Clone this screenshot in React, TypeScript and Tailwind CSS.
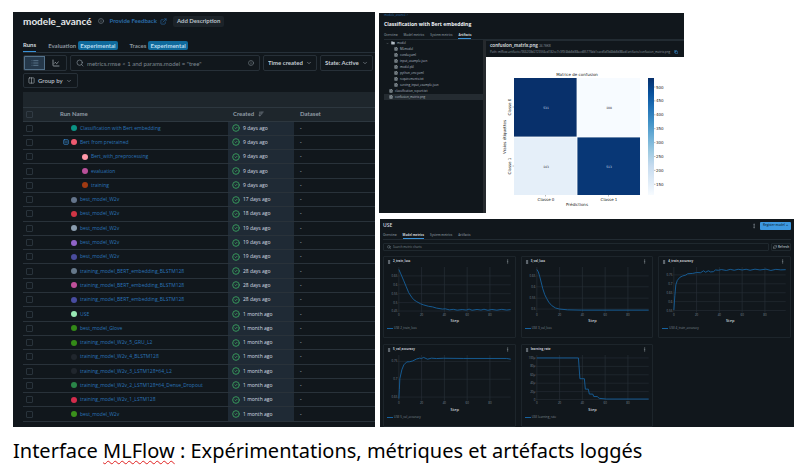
import React from "react";
import {
  ChevronDown,
  CircleCheck,
  Copy,
  EllipsisVertical,
  ExternalLink,
  FileText,
  Folder,
  GripVertical,
  Info,
  LineChart,
  List,
  Columns2,
  RefreshCw,
  Search,
  SquareMinus,
  ArrowDownWideNarrow,
} from "lucide-react";

type Run = { name: string; color: string; age: string; child?: boolean; parent?: boolean };

const runs: Run[] = [
  { name: "Classification with Bert embedding", color: "bg-[#0b9384]", age: "9 days ago" },
  { name: "Bert from pretrained", color: "bg-[#ee5a70]", age: "9 days ago", parent: true },
  { name: "Bert_with_preprocessing", color: "bg-[#ff98a8]", age: "9 days ago", child: true },
  { name: "evaluation", color: "bg-[#b9509a]", age: "9 days ago", child: true },
  { name: "training", color: "bg-[#a03a12]", age: "9 days ago", child: true },
  { name: "best_model_W2v", color: "bg-[#64748b]", age: "17 days ago" },
  { name: "best_model_W2v", color: "bg-[#d03545]", age: "18 days ago" },
  { name: "best_model_W2v", color: "bg-[#8a9cae]", age: "19 days ago" },
  { name: "best_model_W2v", color: "bg-[#9063c8]", age: "19 days ago" },
  { name: "best_model_W2v", color: "bg-[#4a4c9c]", age: "19 days ago" },
  { name: "training_model_BERT_embedding_BLSTM128", color: "bg-[#66788a]", age: "28 days ago" },
  { name: "training_model_BERT_embedding_BLSTM128", color: "bg-[#c0509a]", age: "28 days ago" },
  { name: "training_model_BERT_embedding_BLSTM128", color: "bg-[#484ca0]", age: "28 days ago" },
  { name: "USE", color: "bg-[#98e8b4]", age: "1 month ago" },
  { name: "best_model_Glove", color: "bg-[#338a18]", age: "1 month ago" },
  { name: "training_model_W2v_5_GRU_L2", color: "bg-[#338a18]", age: "1 month ago" },
  { name: "training_model_W2v_4_BLSTM128", color: "bg-[#20262d]", age: "1 month ago" },
  { name: "training_model_W2v_3_LSTM128+64_L2", color: "bg-[#20262d]", age: "1 month ago" },
  { name: "training_model_W2v_2_LSTM128+64_Dense_Dropout", color: "bg-[#2a8648]", age: "1 month ago" },
  { name: "training_model_W2v_1_LSTM128", color: "bg-[#d42c4c]", age: "1 month ago" },
  { name: "best_model_W2v", color: "bg-[#3a901c]", age: "1 month ago" },
];

function Badge() {
  return (
    <span className="rounded-[2px] bg-[#0f6a9c] px-[2px] py-[1px] text-[6px] leading-[7px] font-bold text-[#b8dcf0]">
      Experimental
    </span>
  );
}

function Picker({ label }: { label: string }) {
  return (
    <label className="relative flex h-4 shrink-0 items-center rounded-[2px] border border-[#273038]">
      <select
        aria-label={label}
        className="appearance-none bg-transparent pr-[13px] pl-[4px] text-[6px] font-bold text-[#c3cbd2]"
      >
        <option>{label}</option>
      </select>
      <ChevronDown size={6} className="pointer-events-none absolute right-[4px] text-[#a8b2ba]" />
    </label>
  );
}

function RunsPanel() {
  return (
    <section className="bg-[#11171c] pb-[5px] pl-[10px] font-['Lato','Noto_Sans',sans-serif] leading-none">
      <header className="flex h-[18px] items-center gap-[6px]">
        <h1 className="text-[10px] font-bold text-[#e4e8eb]">modele_avancé</h1>
        <Info size={6} className="text-[#84909a]" />
        <a href="#feedback" className="flex items-center gap-[3px] text-[6px] font-bold text-[#2b6ca8]">
          Provide Feedback <ExternalLink size={7} />
        </a>
        <button className="h-[11px] rounded-[2px] bg-[#1c2329] px-[4px] text-[6px] font-bold text-[#b9c1c8]">
          Add Description
        </button>
      </header>
      <nav className="mt-[9px] flex h-[14px] gap-[12px] border-b border-[#263039] text-[6px] font-bold text-[#8b969f]">
        <a href="#runs" className="flex items-center border-b border-[#3a92d8] text-[#d3d9de]">
          Runs
        </a>
        <a href="#evaluation" className="flex items-center gap-[2px]">
          Evaluation <Badge />
        </a>
        <a href="#traces" className="flex items-center gap-[2px]">
          Traces <Badge />
        </a>
      </nav>
      <div className="mt-[2px] flex gap-[3px] pr-[2px]">
        <div className="flex h-4 w-11 shrink-0 overflow-hidden rounded-[2px] border border-[#273038]">
          <button aria-label="Table view" className="flex w-1/2 items-center justify-center border border-[#53718a] bg-[#25384a] text-[#7292ab]">
            <List size={8} />
          </button>
          <button aria-label="Chart view" className="flex w-1/2 items-center justify-center text-[#c0c8ce]">
            <LineChart size={8} />
          </button>
        </div>
        <label className="flex h-4 min-w-0 flex-1 items-center gap-[3px] rounded-[2px] border border-[#273038] px-[5px] text-[#87929b]">
          <Search size={8} className="shrink-0" />
          <input
            aria-label="Search runs"
            placeholder={'metrics.rmse < 1 and params.model = "tree"'}
            className="min-w-0 flex-1 bg-transparent text-[6px] placeholder:text-[#7d8790] focus:outline-none"
          />
          <Info size={6} className="shrink-0" />
        </label>
        <Picker label="Time created" />
        <Picker label="State: Active" />
      </div>
      <button className="mt-[2px] flex h-[15px] w-[55px] items-center gap-[3px] rounded-[2px] border border-[#273038] pl-[4px] text-[6px] font-bold text-[#aab3ba]">
        <Columns2 size={7} /> Group by <ChevronDown size={6} />
      </button>
      <table className="mt-[4px] h-[330px] w-full table-fixed border-collapse border-b border-[#29323a] text-left">
        <colgroup>
          <col className="w-[37px]" />
          <col className="w-[168px]" />
          <col className="w-[66px]" />
          <col />
        </colgroup>
        <thead className="bg-[#1e262c] text-[6px] font-bold text-[#909ba4]">
          <tr className="h-[15px] border-b border-[#2d373f]">
            <td colSpan={4} />
          </tr>
          <tr className="h-[14px] border-b border-[#2d373f]">
            <th className="pl-[3px]">
              <input type="checkbox" aria-label="Select all runs" className="block size-[7px] appearance-none rounded-[1px] border border-[#313b44]" />
            </th>
            <th>Run Name</th>
            <th className="pl-[5px]">
              <span className="flex items-center gap-[4px]">
                Created <ArrowDownWideNarrow size={6} />
              </span>
            </th>
            <th className="pl-[6px]">Dataset</th>
          </tr>
        </thead>
        <tbody className="font-['Open_Sans','Noto_Sans',sans-serif] text-[5px]">
          {runs.map((run, i) => (
            <tr key={i} className="h-[14px] border-b border-[#29323a]">
              <td className="pl-[3px]">
                <input type="checkbox" aria-label={`Select ${run.name}`} className="block size-[7px] appearance-none rounded-[1px] border border-[#29333b]" />
              </td>
              <td>
                <span className={run.child ? "flex items-center gap-[3px] pl-[22px]" : "flex items-center gap-[3px] pl-[3px]"}>
                  {!run.child && (
                    <span className="flex w-[5px] text-[#3a8ad0]">{run.parent && <SquareMinus size={6} strokeWidth={3} className="shrink-0" />}</span>
                  )}
                  <span className={`size-[6px] shrink-0 rounded-full ${run.color}`} />
                  <a href="#run" className="whitespace-nowrap text-[#2b74b8]">
                    {run.name}
                  </a>
                </span>
              </td>
              <td className="bg-[#1f2a35] pl-[4px]">
                <span className="flex items-center gap-[3px] whitespace-nowrap text-[#d5dde3]">
                  <CircleCheck size={8} strokeWidth={3} className="text-[#37945a]" /> {run.age}
                </span>
              </td>
              <td className="pl-[6px] text-[#d5dde3]">-</td>
            </tr>
          ))}
        </tbody>
      </table>
    </section>
  );
}

const files = [
  "MLmodel",
  "conda.yaml",
  "input_example.json",
  "model.pkl",
  "python_env.yaml",
  "requirements.txt",
  "serving_input_example.json",
];

function Tabs({ active }: { active: string }) {
  return (
    <nav className="flex gap-[6px] border-b border-[#222b32] text-[3px] font-semibold text-[#7d8892]">
      {["Overview", "Model metrics", "System metrics", "Artifacts"].map((t) => (
        <a
          key={t}
          href="#tab"
          className={
            t === active
              ? "flex h-[7px] items-center border-b border-[#3a92d8] font-bold text-[#d3d9de]"
              : "flex h-[7px] items-center"
          }
        >
          {t}
        </a>
      ))}
    </nav>
  );
}

const barTicks = [500, 450, 400, 350, 300, 250, 200, 150];

function ConfusionMatrix() {
  return (
    <svg viewBox="0 0 198 156" className="block w-full bg-white font-['DejaVu_Sans',sans-serif]" role="img" aria-label="Matrice de confusion">
      <defs>
        <linearGradient id="blues" x1="0" y1="0" x2="0" y2="1">
          <stop offset="0" stopColor="#08306b" />
          <stop offset="0.13" stopColor="#08519c" />
          <stop offset="0.25" stopColor="#2171b5" />
          <stop offset="0.38" stopColor="#4292c6" />
          <stop offset="0.5" stopColor="#6baed6" />
          <stop offset="0.63" stopColor="#9ecae1" />
          <stop offset="0.75" stopColor="#c6dbef" />
          <stop offset="0.88" stopColor="#deebf7" />
          <stop offset="1" stopColor="#f7fbff" />
        </linearGradient>
      </defs>
      <rect x="28" y="21" width="63" height="59" fill="#08306b" />
      <rect x="91" y="21" width="63" height="59" fill="#f7fbff" />
      <rect x="28" y="80" width="63" height="58" fill="#e5eff9" />
      <rect x="91" y="80" width="63" height="58" fill="#083776" />
      <path d="M91 21V138M28 80H154" stroke="#fff" strokeWidth="0.8" />
      <path d="M59.500 138v1.500M122.500 138v1.500M28 50h-1.500M28 109h-1.500" stroke="#555" strokeWidth="0.4" />
      <g fill="#222" fontSize="4" textAnchor="middle">
        <text x="91" y="19">Matrice de confusion</text>
        <text x="60" y="52" fill="#d5dfec" fontSize="3">531</text>
        <text x="123" y="52" fontSize="3">108</text>
        <text x="60" y="111" fontSize="3">143</text>
        <text x="123" y="111" fill="#d5dfec" fontSize="3">513</text>
        <text x="60" y="144">Classe 0</text>
        <text x="123" y="144">Classe 1</text>
        <text x="91" y="149">Prédictions</text>
        <text transform="translate(25 50) rotate(-90)">Classe 0</text>
        <text transform="translate(25 109) rotate(-90)">Classe 1</text>
        <text transform="translate(20 80) rotate(-90)">Vraies étiquettes</text>
      </g>
      <rect x="162" y="21" width="6" height="117" fill="url(#blues)" />
      {barTicks.map((v, i) => (
        <g key={v}>
          <path d={`M168 ${30 + i * 13.9}h1.500`} stroke="#555" strokeWidth="0.4" />
          <text x="170" y={31.5 + i * 13.9} fontSize="4" fill="#222">{v}</text>
        </g>
      ))}
    </svg>
  );
}

function ArtifactsPanel() {
  return (
    <section className="w-[73.5%] bg-[#11171c] font-['Open_Sans','Noto_Sans',sans-serif] leading-none">
      <div className="h-[27px] pt-px pl-[5px]">
        <a href="#parent" className="block h-[5px] text-[3px] text-[#2b6ca8]">modele_avancé &gt;</a>
        <h2 className="pt-[2px] text-[5px] leading-[6px] font-bold text-[#eef1f4]">Classification with Bert embedding</h2>
        <div className="pt-[5px]">
          <Tabs active="Artifacts" />
        </div>
      </div>
      <div className="grid grid-cols-[107fr_198fr]">
        <div className="flex">
          <ul className="flex flex-1 flex-col pl-[5px] text-[3px] text-[#b3bcc4]">
            <li className="flex h-[6px] items-center gap-[2px] pl-[2px]">
              <ChevronDown size={3} />
              <Folder size={4} fill="currentColor" /> model
            </li>
            {files.map((f) => (
              <li key={f} className="flex h-[6px] items-center gap-[2px] pl-[10px]">
                <FileText size={4} strokeWidth={3} /> {f}
              </li>
            ))}
            <li className="flex h-[6px] items-center gap-[2px] pl-[5px]">
              <FileText size={4} strokeWidth={3} /> classification_report.txt
            </li>
            <li className="flex h-[6px] items-center gap-[2px] bg-[#242b31] pl-[5px]">
              <FileText size={4} strokeWidth={3} /> confusion_matrix.png
            </li>
          </ul>
          <div className="w-[3px] bg-[#262a2e]" />
        </div>
        <div className="min-w-0">
          <div className="h-[17px] border-t border-[#222b32] pt-[2px] pl-[4px]">
            <p className="font-['Lato',sans-serif] text-[5px] font-bold text-[#d5dade]">
              confusion_matrix.png <span className="text-[3px] font-normal text-[#7d8892]">24.78KB</span>
            </p>
            <p className="flex items-center gap-[4px] pt-[2px] text-[3px] whitespace-nowrap text-[#8b969f]">
              Path: mlflow-artifacts:/966208d27235f4ed182ce7c3f9/4bb8d88aed85775bb1cacd5d9d4bb8d88ad/artifacts/confusion_matrix.png
              <Copy size={4} strokeWidth={3} className="text-[#3a92d8]" />
            </p>
          </div>
          <ConfusionMatrix />
        </div>
      </div>
    </section>
  );
}

type Chart = { title: string; ticks: [string, number][]; line: string };

const charts: Chart[] = [
  {
    title: "2_train_loss",
    ticks: [["0.65", 10], ["0.6", 19], ["0.55", 28], ["0.5", 37], ["0.45", 45.5]],
    line: "M15 3.500L17 8L20 15L22.500 21L25 27L28 31.500L30 34L33 36L37 38.200L40 39.300L45 40.700L49 41.300L53 42.500L59 43.500L62 43.300L66 44.300L70 43.800L74 44.600L79 44L83 44.500L86 43.600L89 44.700L94 43.900L98 44.500L101 43.700L105 44.700L109 43.900L114 44.600L119 43.800L124 44.500L128 44",
  },
  {
    title: "3_val_loss",
    ticks: [["0.65", 10], ["0.6", 21], ["0.55", 32.5], ["0.5", 43.5]],
    line: "M15 3.500L16.500 6L18 11L21 23L23 29L25 33L27 36.500L30 40L34 42.500L38 43.500L46 44.300L60 44.600H128",
  },
  {
    title: "4_train_accuracy",
    ticks: [["0.75", 9], ["0.7", 18], ["0.65", 27], ["0.6", 36], ["0.55", 45]],
    line: "M15 44.500L16 30L17 19L18.500 14.500L21 11.500L24 10L27 9.200L29 7.800L34 7.500L38 6.600L42 6.800L45 4.800L47 6.300L50 4.800L52 6L55 5.700L57 4L60 4.300L63 3.600L68 4.500L72 3.400L76 4.300L80 3.300L84 4L88 3.300L92 4.300L97 3.200L102 4L108 3.200L113 4.500L118 3.400L123 3.900L128 3.700",
  },
  {
    title: "5_val_accuracy",
    ticks: [["0.75", 7.5], ["0.7", 25.5], ["0.65", 43.5]],
    line: "M15 45L15.500 36L16 25L18 16L20 11L23 8L26 7.800L29 7L33 5L36 4.200L38 4.500L40 3.500L44 5.200L48 4.200L53 4.600L60 4.300L80 4.500H124L128 5.200",
  },
  {
    title: "learning_rate",
    ticks: [["100µ", 4], ["80µ", 12.5], ["60µ", 21], ["40µ", 29.5], ["20µ", 38], ["0", 46]],
    line: "M15 4H57L58.500 25H63L64 35.500H67L68 40.500H71.500L72.500 43H76L78 44.800L85 45.500H128",
  },
];

function ChartCard({ chart }: { chart: Chart }) {
  return (
    <article className="rounded-[1px] border border-[#1d252b] pb-[7px]">
      <header className="flex h-[9px] items-center gap-[2px] pr-[5px] pl-[3px] text-[#9ba5ad]">
        <GripVertical size={4} strokeWidth={3} />
        <h3 className="flex-1 text-[3px] font-bold text-[#c6cdd3]">{chart.title}</h3>
        <EllipsisVertical size={5} />
      </header>
      <svg viewBox="0 0 132 52" className="block w-full font-['Open_Sans',sans-serif]" role="img" aria-label={chart.title}>
        {[15, 38, 61, 84, 107].map((x, i) => (
          <g key={x}>
            <path d={`M${x} 1V47`} stroke="#2a333b" strokeWidth="0.6" />
            <text x={x} y="51" fontSize="3" textAnchor="middle" fill="#7d8892">{i * 20}</text>
          </g>
        ))}
        {chart.ticks.map(([label, y]) => (
          <g key={label}>
            <path d={`M14 ${y}H128`} stroke="#263038" strokeWidth="0.6" />
            <text x="13.500" y={y + 1} fontSize="3" textAnchor="end" fill="#7d8892">{label}</text>
          </g>
        ))}
        <path d={chart.line} fill="none" stroke="#17629e" strokeWidth="0.9" />
      </svg>
      <p className="mt-[2px] pl-[11px] text-center text-[4px] font-semibold text-[#c6cdd3]">Step</p>
      <p className="mt-[4px] flex items-center gap-[1px] pl-[3px] text-[3px] text-[#7d8892]">
        <span className="h-px w-[6px] bg-[#17629e]" /> USE {chart.title}
      </p>
    </article>
  );
}

function MetricsPanel() {
  return (
    <section className="ml-px flex-1 bg-[#11171c] px-[3px] font-['Open_Sans','Noto_Sans',sans-serif] leading-none">
      <header className="flex h-[13px] items-center gap-[3px]">
        <h2 className="flex-1 text-[5px] font-semibold text-[#d5dbe0]">USE</h2>
        <EllipsisVertical size={6} className="text-[#9ba5ad]" />
        <button className="h-2 w-[31px] rounded-[1px] bg-[#3d98e0] text-[3px] font-semibold text-[#12324c]">
          Register model &nbsp;+
        </button>
      </header>
      <Tabs active="Model metrics" />
      <div className="mt-[3px] mb-[5px] flex h-2 gap-[2px]">
        <label className="flex flex-1 items-center gap-[2px] rounded-[1px] border border-[#1f282e] px-[3px] text-[#7d8892]">
          <Search size={4} strokeWidth={3} />
          <input aria-label="Search metric charts" placeholder="Search metric charts" className="h-[5px] flex-1 bg-transparent text-[3px] placeholder:text-[#7d8892] focus:outline-none" />
        </label>
        <button className="flex w-5 items-center justify-center gap-[1px] rounded-[1px] border border-[#1f282e] text-[3px] font-semibold text-[#b5bec5]">
          <RefreshCw size={4} /> Refresh
        </button>
      </div>
      <div className="grid grid-cols-3 gap-x-[5px] gap-y-[6px]">
        {charts.map((c) => (
          <ChartCard key={c.title} chart={c} />
        ))}
      </div>
    </section>
  );
}

export default function App() {
  return (
    <main className="bg-white pt-3 pr-[5px] pl-[13px]">
      <div className="grid grid-cols-[362fr_415fr] gap-1">
        <RunsPanel />
        <div className="flex flex-col gap-[6px] pt-px">
          <ArtifactsPanel />
          <MetricsPanel />
        </div>
      </div>
      <p className="mt-[9px] font-['Noto_Sans',sans-serif] text-[20px] leading-[30px] text-black">
        Interface{" "}
        <span className="underline decoration-[#e02020] decoration-wavy decoration-1 underline-offset-2">MLFlow</span> :
        Expérimentations, métriques et artéfacts loggés
      </p>
    </main>
  );
}
